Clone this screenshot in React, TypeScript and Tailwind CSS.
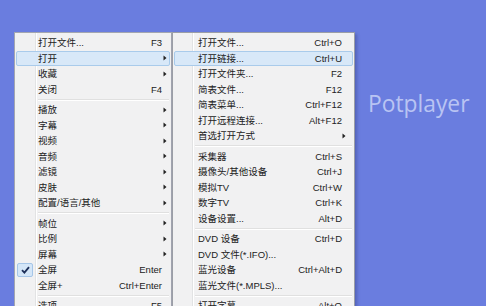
import React from "react";

type Item =
  | { sep: true }
  | { sep?: false; label: string; sc?: string; arrow?: boolean; hl?: boolean; checked?: boolean };

const menu1: Item[] = [
  { label: "打开文件...", sc: "F3" },
  { label: "打开", arrow: true, hl: true },
  { label: "收藏", arrow: true },
  { label: "关闭", sc: "F4" },
  { sep: true },
  { label: "播放", arrow: true },
  { label: "字幕", arrow: true },
  { label: "视频", arrow: true },
  { label: "音频", arrow: true },
  { label: "滤镜", arrow: true },
  { label: "皮肤", arrow: true },
  { label: "配置/语言/其他", arrow: true },
  { sep: true },
  { label: "帧位", arrow: true },
  { label: "比例", arrow: true },
  { label: "屏幕", arrow: true },
  { label: "全屏", sc: "Enter", checked: true },
  { label: "全屏+", sc: "Ctrl+Enter" },
  { sep: true },
  { label: "选项...", sc: "F5" },
];

const menu2: Item[] = [
  { label: "打开文件...", sc: "Ctrl+O" },
  { label: "打开链接...", sc: "Ctrl+U", hl: true },
  { label: "打开文件夹...", sc: "F2" },
  { label: "简表文件...", sc: "F12" },
  { label: "简表菜单...", sc: "Ctrl+F12" },
  { label: "打开远程连接...", sc: "Alt+F12" },
  { label: "首选打开方式", arrow: true },
  { sep: true },
  { label: "采集器", sc: "Ctrl+S" },
  { label: "摄像头/其他设备", sc: "Ctrl+J" },
  { label: "模拟TV", sc: "Ctrl+W" },
  { label: "数字TV", sc: "Ctrl+K" },
  { label: "设备设置...", sc: "Alt+D" },
  { sep: true },
  { label: "DVD 设备", sc: "Ctrl+D" },
  { label: "DVD 文件(*.IFO)..." },
  { label: "蓝光设备", sc: "Ctrl+Alt+D" },
  { label: "蓝光文件(*.MPLS)..." },
  { sep: true },
  { label: "打开字幕...", sc: "Alt+O" },
];

function Arrow() {
  return (
    <svg width="4" height="6" viewBox="0 0 4 6" className="shrink-0">
      <path d="M0.5 0.5 L3.5 3 L0.5 5.5 Z" fill="#222" />
    </svg>
  );
}

function Check() {
  return (
    <div className="w-[16px] h-[14px] rounded-[2px] border border-[#a6c6e8] bg-[#d4e6f8] flex items-center justify-center">
      <svg width="9" height="8" viewBox="0 0 9 8">
        <path d="M1 4.2 L3.4 6.6 L8 1.2" stroke="#1d2f5a" strokeWidth="1.8" fill="none" />
      </svg>
    </div>
  );
}

function Menu({
  items,
  wide,
}: {
  items: Item[];
  wide: boolean;
}) {
  return (
    <div
      className={
        wide
          ? "w-[183px] shrink-0 border border-[#9b9ea6] px-[1px] py-[2px] bg-[linear-gradient(to_right,#f1f1f2_19px,#e2e3e4_19px,#e2e3e4_20px,#ffffff_20px,#ffffff_21px,#f1f1f2_21px)] shadow-[2px_2px_3px_rgba(40,50,110,0.35)]"
          : "w-[158px] shrink-0 border border-[#a3a6b0] px-[1px] py-[2px] bg-[linear-gradient(to_right,#f1f1f2_20px,#e2e3e4_20px,#e2e3e4_21px,#ffffff_21px,#ffffff_22px,#f1f1f2_22px)]"
      }
    >
      {items.map((it, i) =>
        it.sep ? (
          <div key={i} className={wide ? "h-[5px] flex flex-col justify-center pl-[21px] pr-[1px]" : "h-[5px] flex flex-col justify-center pl-[22px] pr-[1px]"}>
            <div className="h-px bg-[#e0e0e0]" />
            <div className="h-px bg-white" />
          </div>
        ) : (
          <div
            key={i}
            className={
              "h-[15.5px] flex items-center rounded-[2px] border " +
              (it.hl ? "border-[#a9cbeb] bg-[#d8e8f8]" : "border-transparent")
            }
          >
            <div className={wide ? "w-[23px] shrink-0 flex items-center" : "w-[21px] shrink-0 flex items-center"}>
              {it.checked ? <Check /> : null}
            </div>
            <div className="flex-1 whitespace-nowrap text-[#222] leading-none">{it.label}</div>
            {it.sc ? (
              <div className={wide ? "whitespace-nowrap text-[#222] leading-none mr-[10px]" : "whitespace-nowrap text-[#222] leading-none mr-[7px]"}>
                {it.sc}
              </div>
            ) : null}
            {it.arrow ? (
              <div className={wide ? "mr-[6px] flex items-center" : "mr-[2px] flex items-center"}>
                <Arrow />
              </div>
            ) : null}
          </div>
        )
      )}
    </div>
  );
}

export default function App() {
  return (
    <div
      className="w-[486px] h-[306px] overflow-hidden bg-[#6a7ddf] pl-[14px] pt-[32px] flex items-start text-[9.5px]"
      style={{ fontFamily: '"Liberation Sans", "Noto Sans CJK SC", sans-serif' }}
    >
      <Menu items={menu1} wide={false} />
      <Menu items={menu2} wide={true} />
      <div
        className="ml-[13px] mt-[61px] text-[22.8px] leading-[22px] text-[#b9c4f3] whitespace-nowrap"
        style={{ fontFamily: '"Open Sans", sans-serif' }}
      >
        Potplayer
      </div>
    </div>
  );
}
